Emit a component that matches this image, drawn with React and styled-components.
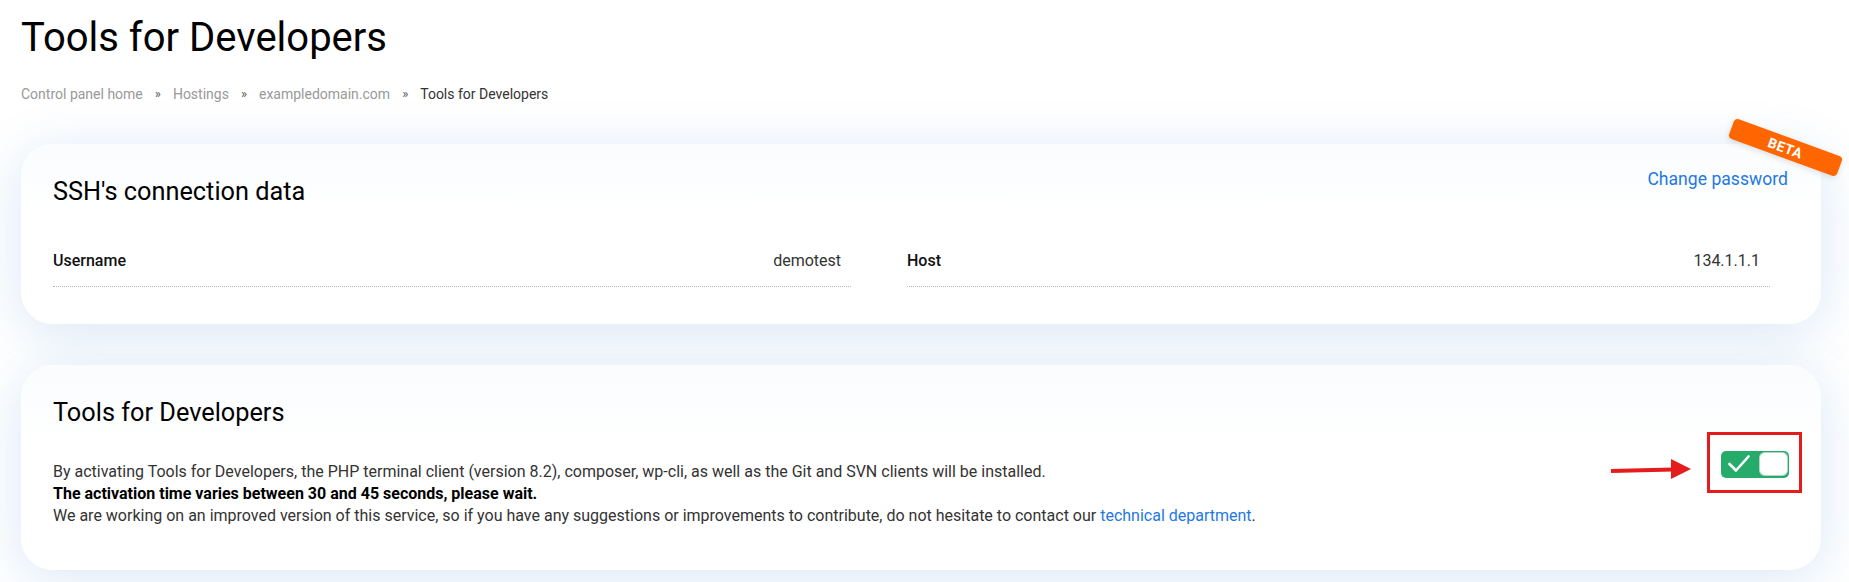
import React from "react";
import styled, { createGlobalStyle } from "styled-components";

const GlobalStyle = createGlobalStyle`
  html, body {
    margin: 0;
    padding: 0;
    background: #ffffff;
  }
  body {
    font-family: Roboto, "Noto Sans", "Liberation Sans", sans-serif;
    color: #333;
    -webkit-font-smoothing: antialiased;
  }
  * { box-sizing: border-box; }
`;

const Page = styled.div`
  padding: 14px 28px 12px 21px;
  min-height: 582px;
  overflow: hidden;
`;

const PageTitle = styled.h1`
  margin: 0;
  font-size: 40px;
  font-weight: 400;
  line-height: 48px;
  color: #000;
`;

const Breadcrumb = styled.nav`
  margin-top: 22px;
  display: flex;
  align-items: center;
  font-size: 14px;
  line-height: 20px;
`;

const Crumb = styled.span`
  color: ${(p) => (p.$current ? "#333" : "#999")};
`;

const Separator = styled.span`
  margin: 0 12px;
  color: #555;
  font-size: 13px;
`;

const Cards = styled.div`
  margin-top: 40px;
  display: flex;
  flex-direction: column;
  gap: 41px;
`;

const Card = styled.section`
  position: relative;
  background: linear-gradient(180deg, #fafcfe 0%, #ffffff 40%);
  border-radius: 32px;
  box-shadow: 0 8px 52px rgba(28, 112, 200, 0.17);
  padding: ${(p) => p.$padding};
`;

const CardHeader = styled.div`
  display: flex;
  justify-content: space-between;
  align-items: flex-start;
`;

const CardTitle = styled.h2`
  margin: 8px 0 0;
  font-size: 25.3px;
  font-weight: 400;
  line-height: 31px;
  color: #000;
`;

const ChangeLink = styled.a`
  font-size: 17.6px;
  line-height: 22px;
  color: #1f78e4;
  text-decoration: none;
  cursor: pointer;
`;

const BetaRibbon = styled.div`
  position: absolute;
  top: -7px;
  right: -22px;
  width: 115px;
  height: 21px;
  background: #ff6600;
  border-radius: 4px;
  transform: rotate(20deg);
  display: flex;
  align-items: center;
  justify-content: center;
  color: #fff;
  font-size: 14px;
  font-weight: 700;
  letter-spacing: 0.4px;
  box-shadow: 0 2px 6px rgba(0, 0, 0, 0.12);
`;

const InfoGrid = styled.div`
  margin-top: 42px;
  margin-right: 18px;
  display: grid;
  grid-template-columns: 798px 1fr;
  column-gap: 56px;
`;

const InfoRow = styled.div`
  display: flex;
  justify-content: space-between;
  align-items: center;
  padding: 0 10px 13px 0;
  border-bottom: 1px dotted #b9b9b9;
  font-size: 16px;
  line-height: 24px;
`;

const InfoLabel = styled.span`
  font-weight: 500;
  color: #111;
`;

const InfoValue = styled.span`
  color: #333;
`;

const FeatureBody = styled.div`
  display: flex;
  align-items: center;
  justify-content: space-between;
`;

const FeatureText = styled.div`
  flex: 1;
`;

const Description = styled.p`
  margin: 33px 0 0;
  font-size: 16px;
  line-height: 22px;
  color: #333;
`;

const Strong = styled.strong`
  font-weight: 700;
  color: #000;
`;

const TextLink = styled.a`
  color: #1f78e4;
  text-decoration: none;
`;

const ToggleArea = styled.div`
  position: relative;
  margin-top: 12px;
`;

const Toggle = styled.button`
  width: 68px;
  height: 27px;
  padding: 1.5px;
  border: none;
  border-radius: 5px;
  background: #27ab6b;
  display: flex;
  align-items: center;
  justify-content: space-between;
  cursor: pointer;
`;

const CheckIcon = styled.svg`
  width: 22px;
  height: 18px;
  margin-left: 5px;
`;

const Knob = styled.span`
  width: 29px;
  height: 24px;
  border-radius: 6px;
  background: #fff;
  box-shadow: inset 0 0 0 1px rgba(30, 140, 90, 0.35);
`;

const Highlight = styled.div`
  position: absolute;
  left: -14px;
  top: -19px;
  width: 95px;
  height: 61px;
  border: 3px solid #e41c1c;
  pointer-events: none;
`;

const Arrow = styled.svg`
  position: absolute;
  left: -110px;
  top: 8px;
  width: 80px;
  height: 21px;
  pointer-events: none;
`;

export default function App() {
  return (
    <>
      <GlobalStyle />
      <Page>
        <PageTitle>Tools for Developers</PageTitle>
        <Breadcrumb>
          <Crumb>Control panel home</Crumb>
          <Separator>»</Separator>
          <Crumb>Hostings</Crumb>
          <Separator>»</Separator>
          <Crumb>exampledomain.com</Crumb>
          <Separator>»</Separator>
          <Crumb $current>Tools for Developers</Crumb>
        </Breadcrumb>

        <Cards>
          <Card $padding="24px 33px 37px 32px">
            <BetaRibbon>BETA</BetaRibbon>
            <CardHeader>
              <CardTitle>SSH's connection data</CardTitle>
              <ChangeLink>Change password</ChangeLink>
            </CardHeader>
            <InfoGrid>
              <InfoRow>
                <InfoLabel>Username</InfoLabel>
                <InfoValue>demotest</InfoValue>
              </InfoRow>
              <InfoRow>
                <InfoLabel>Host</InfoLabel>
                <InfoValue>134.1.1.1</InfoValue>
              </InfoRow>
            </InfoGrid>
          </Card>

          <Card $padding="24px 32px 43px 32px">
            <FeatureBody>
              <FeatureText>
                <CardTitle>Tools for Developers</CardTitle>
                <Description>
                  By activating Tools for Developers, the PHP terminal client (version 8.2), composer, wp-cli, as well as the Git and SVN clients will be installed.
                  <br />
                  <Strong>The activation time varies between 30 and 45 seconds, please wait.</Strong>
                  <br />
                  We are working on an improved version of this service, so if you have any suggestions or improvements to contribute, do not hesitate to contact our{" "}
                  <TextLink>technical department</TextLink>.
                </Description>
              </FeatureText>
              <ToggleArea>
                <Arrow viewBox="0 0 80 21">
                  <line x1="0" y1="12" x2="62" y2="10.5" stroke="#e41c1c" strokeWidth="4" />
                  <polygon points="60,0 80,10 60,20" fill="#e41c1c" />
                </Arrow>
                <Highlight />
                <Toggle aria-label="Tools for Developers enabled">
                  <CheckIcon viewBox="0 0 22 18">
                    <polyline points="1.5,9 8,15.5 20.5,1.5" fill="none" stroke="#fff" strokeWidth="2.6" strokeLinecap="round" strokeLinejoin="round" />
                  </CheckIcon>
                  <Knob />
                </Toggle>
              </ToggleArea>
            </FeatureBody>
          </Card>
        </Cards>
      </Page>
    </>
  );
}
